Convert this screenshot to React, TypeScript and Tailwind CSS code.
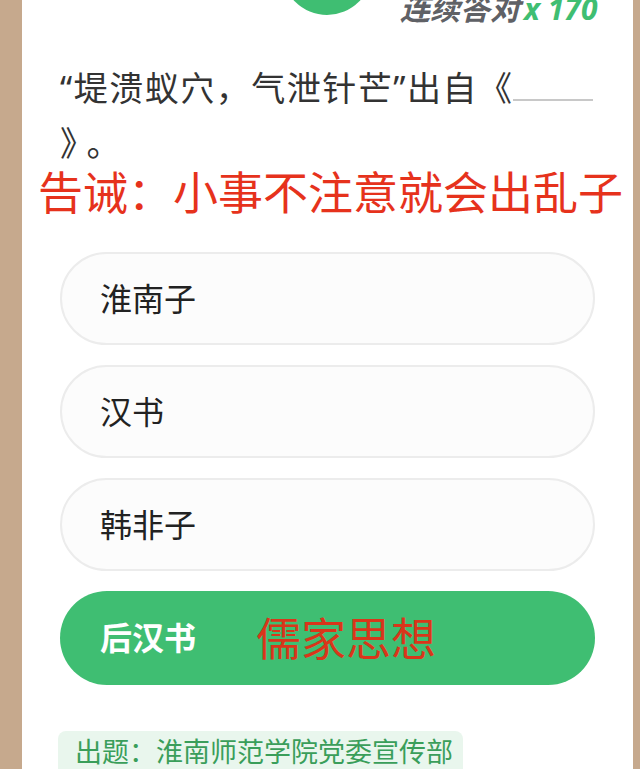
import React from 'react';

const options = ['淮南子', '汉书', '韩非子'];

export default function App() {
  return (
    <div className="w-full h-[769px] overflow-hidden bg-[#c6a98d] pl-[22px] pr-[7px] font-['Noto_Sans','Noto_Sans_CJK_SC',sans-serif]">
      <div className="h-full bg-white flex flex-col">
        {/* header: streak counter, cut off by the top edge */}
        <div className="flex items-start h-[40px]">
          <div className="ml-[260px] mt-[-75px] w-[90px] h-[90px] shrink-0 rounded-full bg-[#3fbe72]"></div>
          <div className="ml-[28px] mt-[-9px] text-[30px] leading-[36px] font-bold italic whitespace-nowrap">
            <span className="text-[#5f6166]">连续答对</span>
            <span className="text-[#3fbe72] ml-[4px]">x 170</span>
          </div>
        </div>

        <p className="mt-[34px] px-[38px] text-[34px] leading-[55px] text-[#333] tracking-[1.5px]">
          “堤溃蚁穴，气泄针芒”出自《
          <span className="inline-block w-[80px] h-[32px] border-b-2 border-[#c8c8c8] align-baseline"></span>
          <br />
          <span className="mr-[8px]">》</span>。
        </p>

        <div className="pl-[16px] text-[45px] leading-[44px] text-[#e6321c] whitespace-nowrap">
          告诫：小事不注意就会出乱子
        </div>

        <div className="mt-[37px] mx-[38px] flex flex-col gap-[20px]">
          {options.map((o) => (
            <div
              key={o}
              className="h-[93px] rounded-full border-2 border-[#ececec] bg-[#fcfcfc] flex items-center pl-[38px] text-[32px] text-[#222]"
            >
              {o}
            </div>
          ))}
          <div className="h-[94px] rounded-full bg-[#3fbe72] flex items-center pl-[40px]">
            <span className="text-[32px] font-bold text-white">后汉书</span>
            <span className="ml-[60px] text-[45px] leading-none text-[#d9361a]">儒家思想</span>
          </div>
        </div>

        <div className="mt-[46px] ml-[36px] w-[405px] flex-1 rounded-t-[8px] bg-[#e9f6ed] pl-[17px] pt-[2px] text-[27px] leading-[38px] text-[#3a9e5a] whitespace-nowrap">
          出题：淮南师范学院党委宣传部
        </div>
      </div>
    </div>
  );
}
